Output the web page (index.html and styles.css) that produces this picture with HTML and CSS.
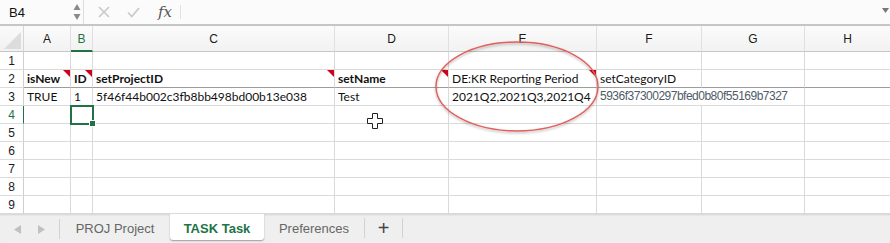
FILE: index.html
```html
<!DOCTYPE html>
<html>
<head>
<meta charset="utf-8">
<link rel="stylesheet" href="styles.css">
</head>
<body>
<div class="app">
  <div class="fbar">
    <div class="namebox">B4</div>
    <div class="stepper">
      <svg width="8" height="18" viewBox="0 0 8 18"><polygon points="4,1 7.5,7 0.5,7" fill="#8a8a8a"/><polygon points="0.5,11 7.5,11 4,17" fill="#8a8a8a"/></svg>
    </div>
    <div class="fbtns">
      <svg class="ic-x" width="12" height="12" viewBox="0 0 12 12"><path d="M1 1L11 11M11 1L1 11" stroke="#c8c8c8" stroke-width="1.6" fill="none"/></svg>
      <svg class="ic-ok" width="13" height="11" viewBox="0 0 13 11"><path d="M1 5.5L4.8 9.5L12 1" stroke="#c8c8c8" stroke-width="1.6" fill="none"/></svg>
      <span class="fx">fx</span>
    </div>
    <div class="finput"></div>
    <svg class="caret" width="7" height="5" viewBox="0 0 7 5"><polygon points="0,0 7,0 3.5,5" fill="#777"/></svg>
  </div>

  <div class="sheet">
    <div class="grid">
      <div class="corner"><div class="tri"></div></div>
      <div class="ch">A</div><div class="ch on">B</div><div class="ch">C</div><div class="ch">D</div><div class="ch">E</div><div class="ch">F</div><div class="ch">G</div><div class="ch last">H</div>

      <div class="rh">1</div><div class="c"></div><div class="c"></div><div class="c"></div><div class="c"></div><div class="c"></div><div class="c"></div><div class="c"></div><div class="c last"></div>

      <div class="rh">2</div><div class="c hd b cm">isNew</div><div class="c hd b cm">ID</div><div class="c hd b cm">setProjectID</div><div class="c hd b cm">setName</div><div class="c hd cm">DE:KR Reporting Period</div><div class="c hd">setCategoryID</div><div class="c hd"></div><div class="c hd last"></div>

      <div class="rh">3</div><div class="c">TRUE</div><div class="c">1</div><div class="c">5f46f44b002c3fb8bb498bd00b13e038</div><div class="c">Test</div><div class="c">2021Q2,2021Q3,2021Q4</div><div class="c ov">5936f37300297bfed0b80f55169b7327</div><div class="c"></div><div class="c last"></div>

      <div class="rh act">4</div><div class="c"></div><div class="c sel"></div><div class="c"></div><div class="c"></div><div class="c"></div><div class="c"></div><div class="c"></div><div class="c last"></div>

      <div class="rh">5</div><div class="c"></div><div class="c"></div><div class="c"></div><div class="c"></div><div class="c"></div><div class="c"></div><div class="c"></div><div class="c last"></div>
      <div class="rh">6</div><div class="c"></div><div class="c"></div><div class="c"></div><div class="c"></div><div class="c"></div><div class="c"></div><div class="c"></div><div class="c last"></div>
      <div class="rh">7</div><div class="c"></div><div class="c"></div><div class="c"></div><div class="c"></div><div class="c"></div><div class="c"></div><div class="c"></div><div class="c last"></div>
      <div class="rh">8</div><div class="c"></div><div class="c"></div><div class="c"></div><div class="c"></div><div class="c"></div><div class="c"></div><div class="c"></div><div class="c last"></div>
      <div class="rh">9</div><div class="c"></div><div class="c"></div><div class="c"></div><div class="c"></div><div class="c"></div><div class="c"></div><div class="c"></div><div class="c last"></div>
    </div>

    <svg class="ring" width="190" height="110" viewBox="0 0 190 110">
      <defs>
        <filter id="sh" x="-10%" y="-10%" width="120%" height="130%">
          <feDropShadow dx="0" dy="1.5" stdDeviation="1.2" flood-color="#000" flood-opacity="0.3"/>
        </filter>
      </defs>
      <ellipse cx="95" cy="53.5" rx="81" ry="44.5" fill="none" stroke="#e0605c" stroke-width="1.4" filter="url(#sh)"/>
    </svg>

    <svg class="cursor" width="16" height="16" viewBox="0 0 16 16">
      <path d="M5.5 0.5H10.5V5.5H15.5V10.5H10.5V15.5H5.5V10.5H0.5V5.5H5.5Z" fill="#fff" stroke="#222" stroke-width="1"/>
    </svg>
  </div>

  <div class="tabs">
    <div class="nav">
      <svg width="7" height="9" viewBox="0 0 7 9"><polygon points="7,0 7,9 0,4.5" fill="#c0c0c0"/></svg>
      <svg width="7" height="9" viewBox="0 0 7 9"><polygon points="0,0 0,9 7,4.5" fill="#c0c0c0"/></svg>
    </div>
    <div class="tab t1">PROJ Project</div>
    <div class="tab active">TASK Task</div>
    <div class="tab t3">Preferences</div>
    <div class="tab plus">+</div>
  </div>
</div>
</body>
</html>
```

FILE: styles.css
```css
* { box-sizing: border-box; }
html, body { margin: 0; padding: 0; }
body { width: 890px; height: 243px; overflow: hidden; background: #fff; font-family: "Liberation Sans", Arial, sans-serif; }

.app { width: 890px; height: 243px; display: flex; flex-direction: column; }

/* formula bar */
.fbar {
  height: 26px;
  flex: 0 0 26px;
  display: flex;
  align-items: center;
  background: #fbfbfb;
  border-bottom: 2px solid #c6c6c6;
  position: relative;
}
.namebox { width: 72px; padding-left: 9px; font-size: 13px; color: #111; }
.stepper { width: 12px; height: 24px; display: flex; align-items: center; border-right: 1px solid #dedede; padding-left: 1px; }
.fbtns { display: flex; align-items: center; padding-left: 14px; width: 97px; border-right: 1px solid #e2e2e2; height: 14px; }
.ic-x { margin-right: 17px; }
.ic-ok { margin-right: 18px; }
.fx { font-family: "DejaVu Serif", "Liberation Serif", serif; font-style: italic; font-size: 15px; color: #555; line-height: 14px; }
.finput { flex: 1; }
.caret { margin-right: 1px; margin-top: -4px; }

/* sheet */
.sheet { position: relative; flex: 0 0 188px; height: 188px; background: #fff; }
.grid {
  display: grid;
  grid-template-columns: 24px 47px 22px 242px 114px 148px 105px 103px 85px;
  grid-template-rows: 26px repeat(9, 18px);
  font-family: Lato, "Open Sans", sans-serif;
  font-size: 12px;
  color: #111;
}
.corner { background: linear-gradient(#fafafa, #f1f1f1); border-right: 1px solid #d6d6d6; border-bottom: 1px solid #c6c6c6; position: relative; }
.tri { position: absolute; right: 2px; bottom: 2px; width: 17px; height: 17px; background: #dcdcdc; clip-path: polygon(100% 0, 100% 100%, 0 100%); }
.ch {
  background: linear-gradient(#fbfbfb, #f2f2f2);
  border-right: 1px solid #e0e0e0;
  border-bottom: 1px solid #c6c6c6;
  display: flex; align-items: center; justify-content: center;
  font-family: "Liberation Sans", Arial, sans-serif;
  font-size: 12px; color: #1a1a1a;
  padding-top: 1px;
}
.ch.on { color: #217346; border-bottom: 2px solid #217346; }
.ch.last { border-right: none; }
.rh {
  border-right: 1px solid #cfcfcf;
  border-bottom: 1px solid #dcdcdc;
  font-family: "Liberation Sans", Arial, sans-serif;
  font-size: 12px; color: #1a1a1a;
  display: flex; align-items: center; justify-content: center;
}
.rh.act { color: #217346; border-right: 1px solid #217346; }
.c {
  border-right: 1px solid #dadada;
  border-bottom: 1px solid #dadada;
  padding-left: 3px;
  line-height: 17px;
  white-space: nowrap;
  position: relative;
}
.c.last { border-right: none; }
.c.hd { border-bottom: 1px solid #9c9c9c; }
.c.b { font-weight: 700; }
.c.cm::after {
  content: "";
  position: absolute; top: 0; right: 0;
  border-top: 7px solid #d0021b;
  border-left: 7px solid transparent;
}
.c.ov { border-right: none; color: #4f5b68; z-index: 1; font-family: "Liberation Sans", Arial, sans-serif; font-size: 12px; letter-spacing: -0.5px; }
.c.sel { outline: 2px solid #217346; outline-offset: -1px; z-index: 2; }
.c.sel::after {
  content: "";
  position: absolute; right: -4px; bottom: -4px;
  width: 5px; height: 5px; background: #217346; border: 1px solid #fff;
  box-sizing: content-box;
}

.ring { position: absolute; left: 422px; top: 7px; z-index: 3; pointer-events: none; }
.cursor { position: absolute; left: 367px; top: 87px; z-index: 3; }

/* tabs */
.tabs {
  flex: 0 0 29px; height: 29px;
  background: #efefef;
  box-shadow: inset 0 2px 2px -1px rgba(0,0,0,0.12);
  display: flex; align-items: flex-start;
  font-family: "Liberation Sans", Arial, sans-serif;
  font-size: 13px; color: #666;
}
.nav { width: 60px; height: 20px; margin-top: 5px; display: flex; align-items: center; gap: 17px; padding-left: 14px; border-right: 1px solid #d2d2d2; }
.tab { height: 26px; display: flex; align-items: center; justify-content: center; padding-top: 2px; }
.t1 { width: 110px; padding-top: 3px; }
.active { width: 94px; background: #fff; color: #217346; font-weight: 700; border-radius: 0 0 3px 3px; box-shadow: 0 1px 1.5px rgba(0,0,0,0.35); }
.t3 { width: 101px; height: 20px; margin-top: 4px; border-right: 1px solid #d2d2d2; padding-top: 0; }
.plus { width: 38px; height: 20px; margin-top: 4px; border-right: 1px solid #d2d2d2; font-size: 20px; color: #444; padding-top: 1px; }
```
